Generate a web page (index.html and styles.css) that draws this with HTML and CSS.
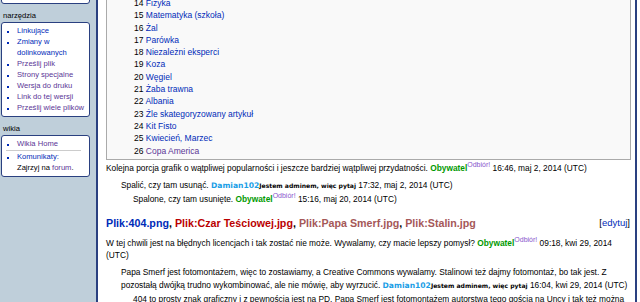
FILE: index.html
```html
<!DOCTYPE html>
<html lang="pl">
<head>
    <meta charset="UTF-8">
    <title>Dyskusja</title>
    <link rel="stylesheet" href="styles.css">
</head>
<body>
    <div class="page">
        <div class="sidebar">
            <div class="portlet portlet-cut"></div>

            <h5>narzędzia</h5>
            <div class="portlet">
                <ul>
                    <li><a href="#">Linkujące</a></li>
                    <li><a href="#">Zmiany w dolinkowanych</a></li>
                    <li><a href="#" class="visited">Prześlij plik</a></li>
                    <li><a href="#" class="visited">Strony specjalne</a></li>
                    <li><a href="#" class="visited">Wersja do druku</a></li>
                    <li><a href="#" class="visited">Link do tej wersji</a></li>
                    <li><a href="#" class="visited">Prześlij wiele plików</a></li>
                </ul>
            </div>

            <h5>wikia</h5>
            <div class="portlet">
                <ul>
                    <li><a href="#" class="visited">Wikia Home</a></li>
                </ul>
                <hr>
                <ul>
                    <li><a href="#">Komunikaty:</a><br>Zajrzyj na <a href="#" class="visited">forum</a>.</li>
                </ul>
            </div>
        </div>

        <div class="content">
            <div class="toc">
                <ul>
                    <li><span class="num">14</span> <a href="#">Fizyka</a></li>
                    <li><span class="num">15</span> <a href="#">Matematyka (szkoła)</a></li>
                    <li><span class="num">16</span> <a href="#">Żal</a></li>
                    <li><span class="num">17</span> <a href="#">Parówka</a></li>
                    <li><span class="num">18</span> <a href="#">Niezależni eksperci</a></li>
                    <li><span class="num">19</span> <a href="#">Koza</a></li>
                    <li><span class="num">20</span> <a href="#">Węgiel</a></li>
                    <li><span class="num">21</span> <a href="#">Żaba trawna</a></li>
                    <li><span class="num">22</span> <a href="#">Albania</a></li>
                    <li><span class="num">23</span> <a href="#">Źle skategoryzowany artykuł</a></li>
                    <li><span class="num">24</span> <a href="#">Kit Fisto</a></li>
                    <li><span class="num">25</span> <a href="#">Kwiecień, Marzec</a></li>
                    <li><span class="num">26</span> <a href="#" class="visited">Copa America</a></li>
                </ul>
            </div>

            <p>Kolejna porcja grafik o wątpliwej popularności i jeszcze bardziej wątpliwej przydatności. <a href="#" class="obywatel">Obywatel</a><sup><a href="#" class="odbior">Odbiór!</a></sup> 16:46, maj 2, 2014 (UTC)</p>
            <dl>
                <dd>Spalić, czy tam usunąć. <a href="#" class="damian">Damian102</a><span class="motto">Jestem adminem, więc pytaj</span> 17:32, maj 2, 2014 (UTC)
                    <dl>
                        <dd>Spalone, czy tam usunięte. <a href="#" class="obywatel">Obywatel</a><sup><a href="#" class="odbior">Odbiór!</a></sup> 15:16, maj 20, 2014 (UTC)</dd>
                    </dl>
                </dd>
            </dl>

            <h2>
                <span class="editsection">[<a href="#">edytuj</a>]</span>
                <a href="#">Plik:404.png</a>, <a href="#" class="new">Plik:Czar Teściowej.jpg</a>, <a href="#" class="new visited">Plik:Papa Smerf.jpg</a>, <a href="#" class="new visited">Plik:Stalin.jpg</a>
            </h2>

            <p>W tej chwili jest na błędnych licencjach i tak zostać nie może. Wywalamy, czy macie lepszy pomysł? <a href="#" class="obywatel">Obywatel</a><sup><a href="#" class="odbior">Odbiór!</a></sup> 09:18, kwi 29, 2014<br>(UTC)</p>
            <dl>
                <dd>Papa Smerf jest fotomontażem, więc to zostawiamy, a Creative Commons wywalamy. Stalinowi też dajmy fotomontaż, bo tak jest. Z pozostałą dwójką trudno wykombinować, ale nie mówię, aby wyrzucić. <a href="#" class="damian">Damian102</a><span class="motto">Jestem adminem, więc pytaj</span> 16:04, kwi 29, 2014 (UTC)
                    <dl>
                        <dd>404 to prosty znak graficzny i z pewnością jest na PD. Papa Smerf jest fotomontażem autorstwa tego gościa na Uncy i tak też można go opisać.</dd>
                    </dl>
                </dd>
            </dl>
        </div>
    </div>
</body>
</html>
```

FILE: styles.css
```css
* {
    margin: 0;
    padding: 0;
    box-sizing: border-box;
}
body {
    font-family: 'Liberation Sans', Arial, sans-serif;
    font-size: 8.35px;
    color: #000;
    background: #fff;
    overflow: hidden;
}
a {
    color: #002bb8;
    text-decoration: none;
}
a.visited {
    color: #5a3696;
}
a.new {
    color: #ba0000;
}
a.new.visited {
    color: #a55858;
}
.page {
    display: flex;
    height: 302px;
    padding-right: 3px;
}
.sidebar {
    width: 98px;
    flex-shrink: 0;
    background: #bfcfda;
    border-right: 2px solid #2a4080;
    padding: 0 6px 0 1px;
}
.sidebar h5 {
    font-size: 7.6px;
    font-weight: normal;
    color: #000;
    padding: 0 0 0 2px;
    margin: 7px 0 1px;
    line-height: 10px;
}
.portlet {
    background: #fff;
    border: 1.5px solid #2a4080;
    border-radius: 3px;
    padding: 2px 4px 3px 8px;
    font-size: 7.6px;
    line-height: 11px;
}
.portlet-cut {
    margin-top: -12px;
    height: 16px;
}
.portlet ul {
    list-style: square;
    padding-left: 7px;
}
.portlet li {
    color: #000;
}
.portlet li::marker {
    color: #002bb8;
    font-size: 6px;
}
.portlet hr {
    border: none;
    border-top: 1px solid #ccc;
    margin: 1px 4px 0 -4px;
}
.content {
    flex: 1;
    min-width: 0;
    border-right: 2px solid #2a4080;
    padding: 0 6px 0 8px;
    line-height: 12.5px;
}
.toc {
    margin: -12px -2px 0 0;
    background: #f9f9f9;
    border: 1px solid #aaa;
    padding: 8px 0 2px 27px;
    font-size: 8.5px;
}
.toc ul {
    list-style: none;
}
.toc li {
    line-height: 12.3px;
}
.toc .num {
    color: #000;
}
p {
    margin: 2px 0 4.5px;
}
dd {
    margin-left: 15px;
}
dd dl {
    margin-top: 2px;
}
dd dd {
    margin-left: 12px;
}
.obywatel {
    color: #009900;
    font-weight: bold;
}
sup {
    font-size: 7px;
    line-height: 0;
    vertical-align: 4.5px;
}
.odbior {
    color: #8855cc;
}
.damian {
    color: #1a9ee6;
    font-family: 'DejaVu Sans', Verdana, sans-serif;
    font-weight: bold;
    font-size: 7.6px;
    line-height: 0;
}
.motto {
    font-family: 'DejaVu Sans', Verdana, sans-serif;
    font-weight: bold;
    font-size: 6.1px;
    line-height: 0;
}
h2 {
    font-size: 10.7px;
    font-weight: bold;
    line-height: 14px;
    margin: 10.5px 0 6.5px;
}
.editsection {
    float: right;
    font-size: 9.5px;
    font-weight: normal;
    margin-right: -1px;
}
```
